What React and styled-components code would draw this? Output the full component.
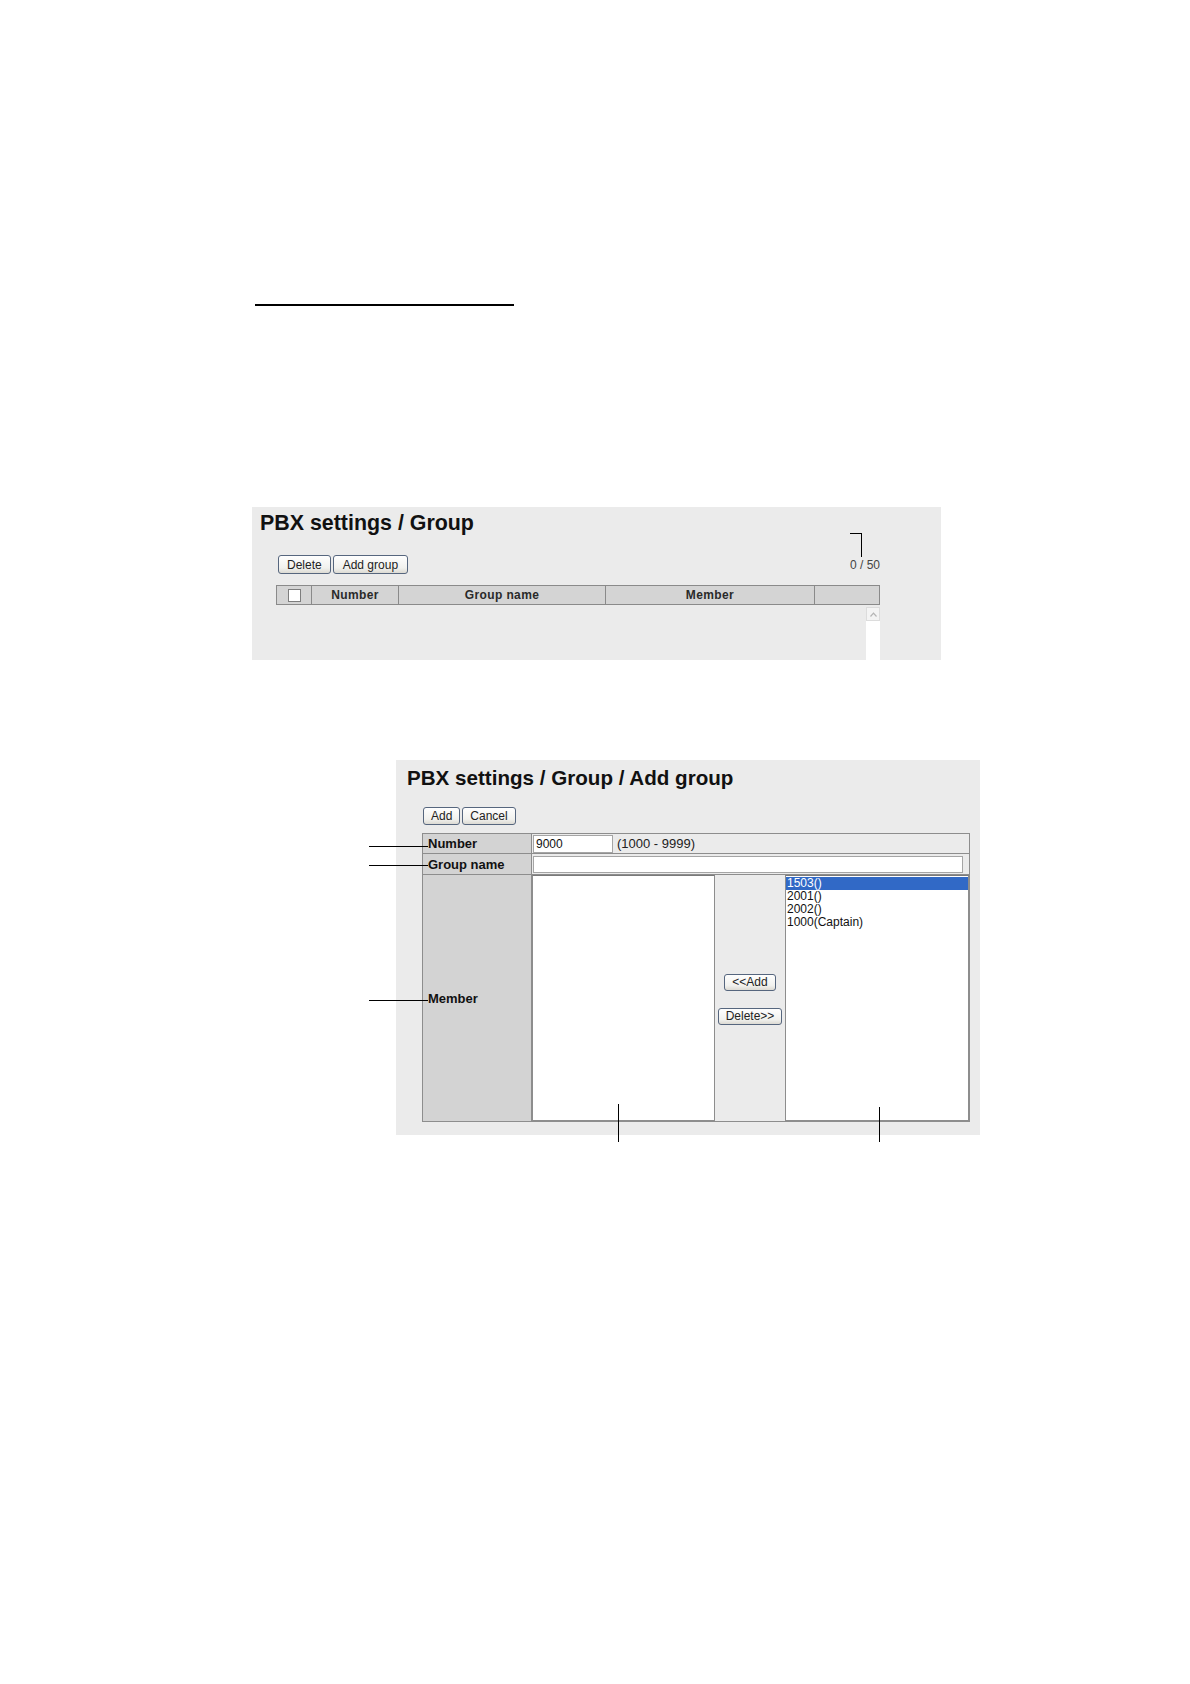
import React from 'react';
import styled, { createGlobalStyle } from 'styled-components';

const GlobalStyle = createGlobalStyle`
  html, body {
    margin: 0;
    padding: 0;
    background: #fff;
  }
  body {
    font-family: 'Liberation Sans', Arial, sans-serif;
    color: #000;
  }
`;

const Page = styled.div`
  width: 1190px;
  min-height: 1684px;
  background: #fff;
  display: flex;
  flex-direction: column;
`;

const Rule = styled.div`
  margin: 304px 0 0 255px;
  width: 259px;
  height: 2px;
  background: #000;
`;

const Panel = styled.section`
  position: relative;
  box-sizing: border-box;
  display: flex;
  flex-direction: column;
  margin-top: ${p => p.$top}px;
  margin-left: ${p => p.$left}px;
  width: ${p => p.$width}px;
  height: ${p => p.$height}px;
  padding-top: ${p => p.$pad}px;
  background: #ebebeb;
`;

const Title = styled.h1`
  margin: 0 0 0 ${p => p.$indent}px;
  font-size: ${p => p.$size}px;
  line-height: 24px;
  font-weight: bold;
  color: #111;
`;

const ToolRow = styled.div`
  display: flex;
  align-items: center;
  justify-content: space-between;
  margin-top: ${p => p.$top}px;
  margin-left: ${p => p.$left}px;
  width: ${p => p.$width}px;
`;

const ButtonGroup = styled.div`
  display: flex;
  gap: 2px;
  padding-left: ${p => p.$pad || 0}px;
`;

const Button = styled.button`
  box-sizing: border-box;
  height: ${p => p.$h || 19}px;
  padding: 0 ${p => p.$px || 7}px;
  font-family: 'Liberation Sans', Arial, sans-serif;
  font-size: 12px;
  color: #222;
  border: 1px solid #56667e;
  border-radius: 3px;
  background: linear-gradient(#fefefe, #f1f1ee 70%, #dcdad3);
  cursor: pointer;
`;

const Count = styled.span`
  font-size: 12px;
  color: #444;
`;

const ListTable = styled.div`
  margin-top: 11px;
  margin-left: 24px;
  width: 604px;
  display: flex;
  flex-direction: column;
  flex: 1;
`;

const HeadRow = styled.div`
  box-sizing: border-box;
  display: grid;
  grid-template-columns: 34px 87px 207px 209px 1fr;
  height: 20px;
  border: 1px solid #8a8a8a;
  background: #d4d4d4;
`;

const HeadCell = styled.div`
  display: flex;
  align-items: center;
  justify-content: center;
  border-left: ${p => (p.$first ? 'none' : '1px solid #8a8a8a')};
  font-size: 12px;
  font-weight: bold;
  letter-spacing: 0.4px;
  color: #2a2a2a;
`;

const CheckBox = styled.span`
  box-sizing: border-box;
  width: 13px;
  height: 13px;
  background: #fff;
  border: 1px solid #7d7d7d;
`;

const ScrollArea = styled.div`
  flex: 1;
  display: flex;
  justify-content: flex-end;
  margin-top: 2px;
`;

const ScrollBar = styled.div`
  width: 14px;
  background: #fff;
`;

const ScrollButton = styled.div`
  box-sizing: border-box;
  height: 14px;
  display: flex;
  align-items: center;
  justify-content: center;
  border: 1px solid #dcdcdc;
  background: #f4f4f4;
`;

const Callout = styled.span`
  position: absolute;
  left: ${p => p.$x}px;
  top: ${p => p.$y}px;
  width: ${p => p.$w || 1}px;
  height: ${p => p.$h || 1}px;
  background: #000;
`;

const Form = styled.div`
  box-sizing: border-box;
  display: grid;
  grid-template-columns: 108px 1fr;
  grid-template-rows: 19px 20px 1fr;
  gap: 1px;
  padding: 1px;
  margin-top: 8px;
  margin-left: 26px;
  width: 548px;
  height: 289px;
  background: #8d8d8d;
`;

const Label = styled.div`
  display: flex;
  align-items: center;
  padding-left: 5px;
  background: #d3d3d3;
  font-size: 13px;
  font-weight: bold;
  color: #111;
`;

const Value = styled.div`
  display: flex;
  align-items: center;
  background: #ebebeb;
  font-size: 13px;
  color: #222;
`;

const TextInput = styled.input`
  box-sizing: border-box;
  width: ${p => p.$w}px;
  height: ${p => p.$h || 18}px;
  margin: 0 4px 0 1px;
  padding: 0 2px;
  border: 1px solid #a5a5a5;
  background: #fff;
  font-family: 'Liberation Sans', Arial, sans-serif;
  font-size: 12px;
  color: #111;
  outline: none;
`;

const MemberCell = styled.div`
  display: flex;
  background: #ebebeb;
`;

const ListBox = styled.div`
  box-sizing: border-box;
  width: ${p => p.$w}px;
  border: 1px solid #8d8d8d;
  border-top-color: #7a7a7a;
  background: #fff;
  padding-top: 1px;
  display: flex;
  flex-direction: column;
`;

const ListItem = styled.div`
  height: 13px;
  line-height: 13px;
  padding-left: 1px;
  font-size: 12px;
  color: ${p => (p.$selected ? '#fff' : '#111')};
  background: ${p => (p.$selected ? '#3169c6' : 'transparent')};
  white-space: nowrap;
`;

const Mover = styled.div`
  flex: 1;
  display: flex;
  flex-direction: column;
  align-items: center;
  justify-content: center;
  gap: 17px;
  padding-top: 2px;
`;

const members = ['1503()', '2001()', '2002()', '1000(Captain)'];

function GroupList() {
  return (
    <Panel $top={201} $left={252} $width={689} $height={153} $pad={4}>
      <Title $indent={8} $size={21.4}>PBX settings / Group</Title>
      <ToolRow $top={20} $left={24} $width={604}>
        <ButtonGroup $pad={2}>
          <Button $px={8}>Delete</Button>
          <Button $px={9}>Add group</Button>
        </ButtonGroup>
        <Count>0 / 50</Count>
      </ToolRow>
      <ListTable>
        <HeadRow>
          <HeadCell $first>
            <CheckBox />
          </HeadCell>
          <HeadCell>Number</HeadCell>
          <HeadCell>Group name</HeadCell>
          <HeadCell>Member</HeadCell>
          <HeadCell />
        </HeadRow>
        <ScrollArea>
          <ScrollBar>
            <ScrollButton>
              <svg width="7" height="5" viewBox="0 0 7 5">
                <path d="M0.5 4.5 L3.5 1.2 L6.5 4.5" fill="none" stroke="#b5b5b5" strokeWidth="1.2" />
              </svg>
            </ScrollButton>
          </ScrollBar>
        </ScrollArea>
      </ListTable>
      <Callout $x={598} $y={26} $w={12} />
      <Callout $x={609} $y={26} $h={24} />
    </Panel>
  );
}

function AddGroup() {
  return (
    <Panel $top={100} $left={396} $width={584} $height={375} $pad={6}>
      <Title $indent={11} $size={20.6}>PBX settings / Group / Add group</Title>
      <ToolRow $top={17} $left={27} $width={120}>
        <ButtonGroup>
          <Button $h={18}>Add</Button>
          <Button $h={18}>Cancel</Button>
        </ButtonGroup>
      </ToolRow>
      <Form>
        <Label>Number</Label>
        <Value>
          <TextInput $w={80} defaultValue="9000" />
          (1000 - 9999)
        </Value>
        <Label>Group name</Label>
        <Value>
          <TextInput $w={430} $h={17} />
        </Value>
        <Label>Member</Label>
        <MemberCell>
          <ListBox $w={183} />
          <Mover>
            <Button $h={17}>&lt;&lt;Add</Button>
            <Button $h={17}>Delete&gt;&gt;</Button>
          </Mover>
          <ListBox $w={184}>
            {members.map((m, i) => (
              <ListItem key={m} $selected={i === 0}>
                {m}
              </ListItem>
            ))}
          </ListBox>
        </MemberCell>
      </Form>
      <Callout $x={-27} $y={86} $w={59} />
      <Callout $x={-27} $y={105} $w={59} />
      <Callout $x={-27} $y={240} $w={59} />
      <Callout $x={222} $y={344} $h={38} />
      <Callout $x={483} $y={347} $h={35} />
    </Panel>
  );
}

export default function App() {
  return (
    <Page>
      <GlobalStyle />
      <Rule />
      <GroupList />
      <AddGroup />
    </Page>
  );
}
